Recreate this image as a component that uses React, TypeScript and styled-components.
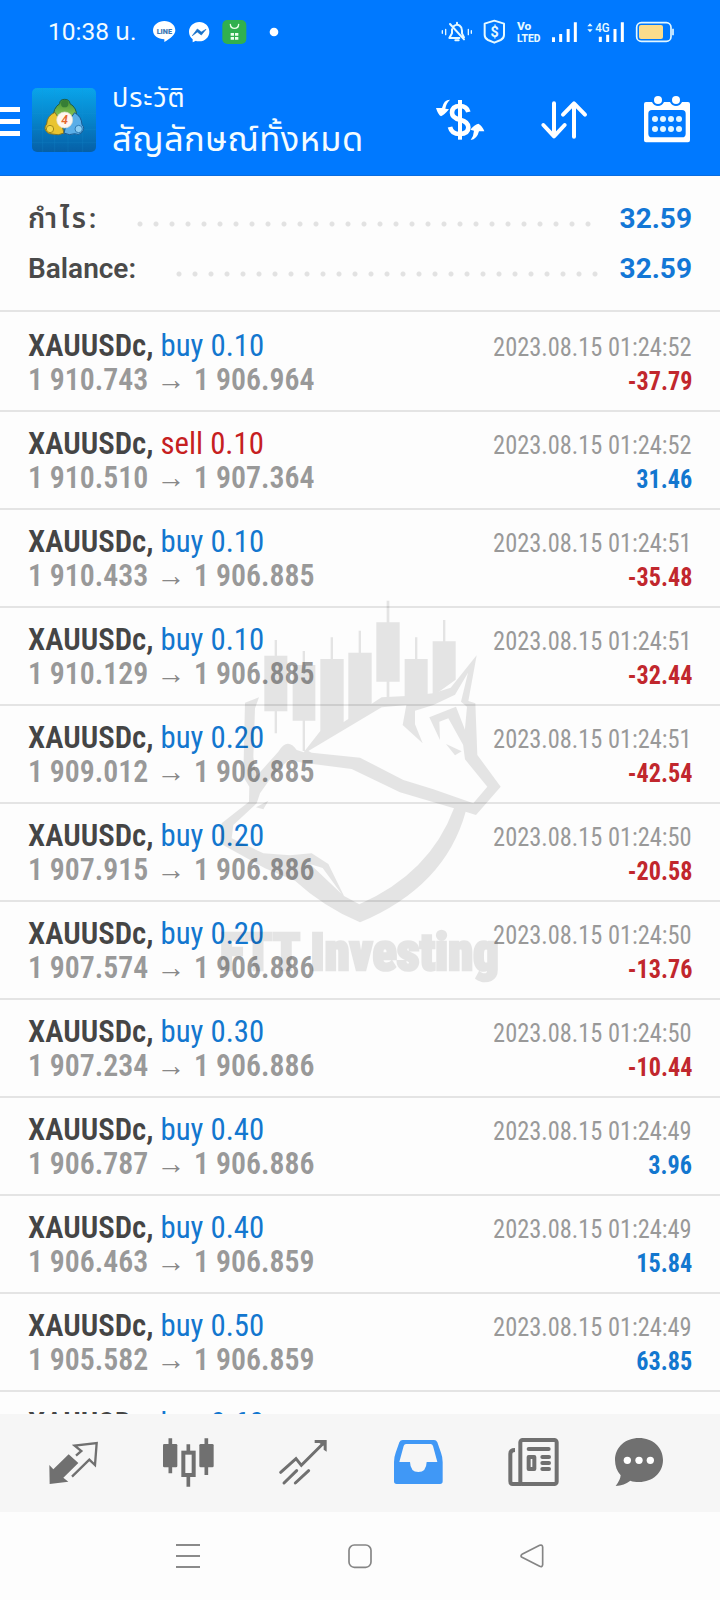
import React from 'react';
import styled, { createGlobalStyle } from 'styled-components';

const GlobalStyle = createGlobalStyle`
  * { box-sizing: border-box; }
  body { margin: 0; background: #fdfdfd; font-family: Roboto, "Noto Sans Thai", sans-serif; }
  svg { display: block; flex: none; }
`;

const Screen = styled.div`
  position: relative;
  width: 720px;
  height: 1600px;
  display: flex;
  flex-direction: column;
  overflow: hidden;
  background: #fdfdfd;
`;

const Header = styled.header`
  flex: none;
  height: 176px;
  background: #0079ff;
  color: #fff;
  border-bottom: 1px solid #0a6de0;
`;

const StatusBar = styled.div`
  height: 64px;
  padding: 0 44px 0 48px;
  display: flex;
  align-items: center;
  justify-content: space-between;
`;

const StatusLeft = styled.div`
  display: flex;
  align-items: center;
  gap: 12px;
`;

const StatusRight = styled.div`
  display: flex;
  align-items: center;
  gap: 9px;
`;

const Clock = styled.span`
  width: 93px;
  font-size: 24.5px;
  line-height: 30px;
  font-weight: 400;
  white-space: nowrap;
  color: #f2fbff;
`;

const Toolbar = styled.div`
  height: 112px;
  padding-right: 29px;
  display: flex;
  align-items: center;
`;

const MenuButton = styled.div`
  width: 20px;
  margin-top: 3px;
  display: flex;
  flex-direction: column;
  gap: 7px;
`;

const MenuBar = styled.span`
  height: 5px;
  background: #fff;
`;

const AppIcon = styled.svg`
  margin-left: 12px;
  border-radius: 5px;
`;

const Titles = styled.div`
  flex: 1;
  margin-left: 16px;
  padding-top: 2px;
  color: #f4fcff;
  white-space: nowrap;
`;

const Subtitle = styled.div`
  font-size: 27px;
  letter-spacing: 0.9px;
  line-height: 36px;
`;

const Title = styled.div`
  font-size: 34.500px;
  letter-spacing: 0.4px;
  line-height: 46px;
`;

const Actions = styled.div`
  display: flex;
  gap: 55px;
`;

const Summary = styled.section`
  flex: none;
  height: 136px;
  padding: 18px 28px 0;
  border-bottom: 2px solid #e4e4e4;
`;

const SummaryRow = styled.div`
  height: 50px;
  display: flex;
  align-items: center;
  justify-content: space-between;
  font-size: 28px;
  line-height: 50px;
  font-weight: 700;
`;

const SummaryLabel = styled.span<{ $width: number; $spacing?: number }>`
  width: ${p => p.$width}px;
  letter-spacing: ${p => p.$spacing ?? 0}px;
  font-size: 28px;
  font-weight: 600;
  white-space: nowrap;
  color: #4a4a4a;
`;

const Leader = styled.span<{ $width: number; $gap: number }>`
  width: ${p => p.$width}px;
  height: 16px;
  margin: 10px ${p => p.$gap}px 0 auto;
  background: radial-gradient(circle at center, #e2e2e2 2px, transparent 3px) 0 0 / 16px 16px repeat-x;
`;

const SummaryValue = styled.span`
  color: #1377d6;
`;

const List = styled.main`
  flex: 1;
  min-height: 0;
  overflow: hidden;
  font-family: "Roboto Condensed", Roboto, sans-serif;
`;

const Deal = styled.article`
  height: 98px;
  padding: 14px 28px 0;
  border-bottom: 2px solid #e4e4e4;
  &:first-child { height: 100px; padding-top: 16px; }
`;

const DealLine = styled.div`
  height: 34px;
  display: flex;
  align-items: baseline;
  justify-content: space-between;
  line-height: 34px;
  white-space: nowrap;
`;

const Instrument = styled.span`
  font-size: 32px;
  color: #454545;
  transform: scaleX(0.962);
  transform-origin: left;
`;

const SymbolName = styled.span`
  font-weight: 600;
`;

const Side = styled.span<{ $sell?: boolean }>`
  color: ${p => (p.$sell ? '#c6201f' : '#1377cf')};
`;

const Prices = styled.span`
  display: flex;
  align-items: baseline;
  font-size: 32px;
  font-weight: 600;
  color: #999;
  transform: scaleX(0.932);
  transform-origin: left;
`;

const Arrow = styled.span`
  width: 49px;
  text-align: center;
  font-size: 31px;
  font-weight: 500;
  color: #888;
`;

const Stamp = styled.span`
  font-size: 26px;
  color: #999;
  transform: scaleX(0.938);
  transform-origin: right;
`;

const Profit = styled.span<{ $loss: boolean }>`
  font-size: 26px;
  font-weight: 700;
  transform: scaleX(0.93);
  transform-origin: right;
  color: ${p => (p.$loss ? '#c1272d' : '#1377cf')};
`;

const Watermark = styled.svg`
  position: absolute;
  left: 200px;
  top: 590px;
  opacity: 0.095;
  pointer-events: none;
`;

const TabBar = styled.nav`
  flex: none;
  height: 98px;
  padding-left: 16px;
  display: flex;
  background: #f6f6f6;
`;

const SystemBar = styled.footer`
  flex: none;
  height: 88px;
  padding: 0 176px;
  display: flex;
  align-items: center;
  justify-content: space-between;
`;

type Trade = [side: string, volume: string, open: string, close: string, time: string, profit: string];

const trades: Trade[] = [
  ['buy', '0.10', '1 910.743', '1 906.964', '01:24:52', '-37.79'],
  ['sell', '0.10', '1 910.510', '1 907.364', '01:24:52', '31.46'],
  ['buy', '0.10', '1 910.433', '1 906.885', '01:24:51', '-35.48'],
  ['buy', '0.10', '1 910.129', '1 906.885', '01:24:51', '-32.44'],
  ['buy', '0.20', '1 909.012', '1 906.885', '01:24:51', '-42.54'],
  ['buy', '0.20', '1 907.915', '1 906.886', '01:24:50', '-20.58'],
  ['buy', '0.20', '1 907.574', '1 906.886', '01:24:50', '-13.76'],
  ['buy', '0.30', '1 907.234', '1 906.886', '01:24:50', '-10.44'],
  ['buy', '0.40', '1 906.787', '1 906.886', '01:24:49', '3.96'],
  ['buy', '0.40', '1 906.463', '1 906.859', '01:24:49', '15.84'],
  ['buy', '0.50', '1 905.582', '1 906.859', '01:24:49', '63.85'],
];

function DealRow({ trade }: { trade: Trade }) {
  const [side, volume, open, close, time, profit] = trade;
  return (
    <Deal>
      <DealLine>
        <Instrument>
          <SymbolName>XAUUSDc,</SymbolName> <Side $sell={side === 'sell'}>{side} {volume}</Side>
        </Instrument>
        <Stamp>2023.08.15 {time}</Stamp>
      </DealLine>
      <DealLine>
        <Prices>{open}<Arrow>→</Arrow>{close}</Prices>
        <Profit $loss={profit.startsWith('-')}>{profit}</Profit>
      </DealLine>
    </Deal>
  );
}

/* Icons are drawn on a grid of three units to one pixel. */
function Icon({ box, children }: { box: [number, number, number, number]; children: React.ReactNode }) {
  return (
    <svg width={box[2] / 3} height={box[3] / 3} viewBox={box.join(' ')} fill="none">
      {children}
    </svg>
  );
}

function StatusIcons() {
  return (
    <StatusRight>
      <Icon box={[243, 57, 96, 78]}>
        <g stroke="#e6faff" strokeWidth="6" strokeLinecap="round" strokeLinejoin="round">
          <path d="M247 92v8M257 88v16M325 88v16M334 92v8" strokeWidth="4" />
          <path d="M282 78q8-7 17-1 7 5 7 15v8l6 12M276 88v12l-8 14h30M270 72l42 46M286 121h10M291 68v4" />
        </g>
      </Icon>
      <Icon box={[366, 57, 72, 78]}>
        <path d="M403 62l29 9v34q0 10-10 15l-19 8-19-8q-10-5-10-15V71z" stroke="#e6faff" strokeWidth="6" strokeLinejoin="round" />
        <text x="403.500" y="111" textAnchor="middle" fontSize="43" fontWeight="700" fontFamily="Roboto" fill="#e6faff">$</text>
      </Icon>
      <Icon box={[465, 57, 81, 78]}>
        <g fill="#e6faff" fontFamily="Roboto" fontWeight="800">
          <text x="471" y="91" fontSize="31" textLength="43" lengthAdjust="spacingAndGlyphs">Vo</text>
          <text x="471" y="125" fontSize="35" textLength="70" lengthAdjust="spacingAndGlyphs">LTED</text>
        </g>
      </Icon>
      <Icon box={[573, 57, 81, 78]}>
        <path d="M580.500 112v14M602 102v24M624.500 87v39M646 67v59" stroke="#fff" strokeWidth="9" />
      </Icon>
      <Icon box={[681, 57, 114, 78]}>
        <path d="M721 110v16M743 104v22M765 87v39M787 67v59" stroke="#fff" strokeWidth="9" />
        <path d="M682 79l8-9 8 9zM682 88l8 9 8-9z" fill="#e6faff" />
        <text x="706" y="95" fontSize="37" fontWeight="500" fontFamily="Roboto" fill="#e6faff" textLength="43" lengthAdjust="spacingAndGlyphs">4G</text>
      </Icon>
      <Icon box={[822, 57, 126, 78]}>
        <rect x="830" y="68" width="103" height="56" rx="14" stroke="#e2f7ff" strokeWidth="5" />
        <rect x="837" y="75" width="72" height="42" rx="6" fill="#fbdc8c" />
        <path d="M939 86v20" stroke="#e2f7ff" strokeWidth="5" />
      </Icon>
    </StatusRight>
  );
}

function NotificationIcons() {
  return (
    <>
      <Icon box={[459, 57, 69, 78]}>
        <path d="M493 63c18 0 33 12 33 28 0 14-15 25-33 35v-8c-19 0-34-11-34-27s16-28 34-28z" fill="#fff" />
        <text x="470" y="101" fontSize="22" fontWeight="900" fontFamily="Roboto" fill="#3d78b4" textLength="46" lengthAdjust="spacingAndGlyphs">LINE</text>
      </Icon>
      <Icon box={[564, 57, 66, 78]}>
        <path d="M598 66c17 0 30 13 30 29s-13 29-30 29c-4 0-7 0-10-2l-10 5v-9c-7-6-11-14-11-23 0-16 14-29 31-29z" fill="#fff" />
        <path d="M577 107l15-20 12 9 14-8-14 17-12-9z" fill="#1a72c9" stroke="#1a72c9" strokeWidth="2" strokeLinejoin="round" />
      </Icon>
      <Icon box={[666, 57, 75, 78]}>
        <rect x="667" y="60" width="72" height="72" rx="15" fill="#31b04e" />
        <path d="M691 73q1 12 12.500 12T716 73" stroke="#eaffea" strokeWidth="4" strokeLinecap="round" />
        <path d="M692 99h10v8h-10zM705 99h10v8h-10zM692 111h10v8h-10zM705 111h10v8h-10z" fill="#eaffea" />
      </Icon>
      <Icon box={[777, 57, 90, 78]}>
        <circle cx="822" cy="96" r="13" fill="#fff" />
      </Icon>
    </>
  );
}

function TerminalLogo() {
  return (
    <AppIcon width="64" height="64" viewBox="96 264 192 192">
      <defs>
        <linearGradient id="tile" x1="0" y1="0" x2="0" y2="1">
          <stop offset="0" stopColor="#0aa4ea" />
          <stop offset="0.5" stopColor="#0784ca" />
          <stop offset="1" stopColor="#0760a6" />
        </linearGradient>
        <linearGradient id="green" x1="0" y1="0" x2="0" y2="1">
          <stop offset="0" stopColor="#3f8f34" />
          <stop offset="1" stopColor="#9bd05a" />
        </linearGradient>
      </defs>
      <rect x="96" y="264" width="192" height="192" fill="url(#tile)" />
      <path d="M128 264v192M164 264v192M204 264v192M248 264v192M96 300h192M96 340h192M96 388h192M96 428h192" stroke="#1b97d8" strokeWidth="1" opacity="0.5" />
      <path d="M161 352q-3-27 18-41 0-13 15-13t16 13q21 12 20 39l-30 10z" fill="url(#green)" stroke="#1d5c4c" strokeWidth="3" />
      <circle cx="194" cy="311" r="11" fill="#367e35" />
      <path d="M165 337q-24 10-25 35-12 14 3 26 4 4 13 4 20 6 36-3l-9-32z" fill="#e9c431" stroke="#7d7428" strokeWidth="3" />
      <circle cx="150" cy="387" r="11" fill="#f3d84c" stroke="#a28a1b" strokeWidth="3" />
      <path d="M224 338q21 12 22 36 11 10-2 25-8 8-20 2-16 7-32-2l7-27z" fill="#5aaee8" stroke="#1b5c93" strokeWidth="3" />
      <circle cx="236" cy="387" r="11" fill="#8bcdf4" stroke="#2f7cb6" strokeWidth="3" />
      <circle cx="194" cy="360" r="24" fill="#fff6ee" stroke="#d8dcd2" strokeWidth="2" />
      <text x="194" y="373" textAnchor="middle" fontFamily="Roboto" fontSize="36" fontWeight="600" fontStyle="italic" fill="#e5672d">4</text>
    </AppIcon>
  );
}

function ActionIcons() {
  return (
    <Actions>
      <Icon box={[225, 288, 150, 144]}>
        <path d="M325 336q-5-18-25-18-24 0-24 20 0 15 24 21 25 6 25 23 0 20-26 20-24 0-29-21" stroke="#fff" strokeWidth="14" strokeLinejoin="round" />
        <path d="M300 300v119" stroke="#fff" strokeWidth="12" />
        <path d="M270 299q-19 0-24 25l-18 0q6 20 15 25 10-4 24-21l-11-2q2-15 14-27zM332 420q19-2 25-26l16 0q-6-17-18-23-12 3-24 18l11 3q-1 17-10 28z" fill="#fff" />
      </Icon>
      <Icon box={[540, 288, 144, 144]}>
        <path d="M582 310v94M550 375l32 34 32-34M642 410v-94M609 344l33-34 33 34" stroke="#fff" strokeWidth="12" strokeLinecap="round" strokeLinejoin="round" />
      </Icon>
      <Icon box={[849, 288, 144, 144]}>
        <path fillRule="evenodd" d="M858 306h18q6 12 18 12t18-12h18q6 12 18 12t18-12h18q6 0 6 6v109q0 6-6 6H858q-6 0-6-6V312q0-6 6-6zM876 330q-11 0-11 11v60q0 11 11 11h90q11 0 11-11v-60q0-11-11-11z" fill="#fff" />
        <g fill="#fff"><circle cx="894" cy="300" r="12" /><circle cx="948" cy="300" r="12" /></g>
        <g fill="#e2f6ff">
          {[885, 909, 933, 957].map(x => (
            <React.Fragment key={x}><circle cx={x} cy="357" r="9" /><circle cx={x} cy="387" r="9" /></React.Fragment>
          ))}
        </g>
      </Icon>
    </Actions>
  );
}

function BrandMark() {
  return (
    <Watermark width="320" height="400" viewBox="0 0 960 1200">
      <path d="M193 197h69v167h-69zM278 225h68v167h-68zM361 207h70v192l-25 24h-45zM445 188h70v155l-70 50zM529 97h70v178h-70zM614 207h69v108l-69 20zM698 154h69v115l-69 50z" />
      <path d="M224 150h7v280h-7zM308 183h7v300h-7zM392 142h7v70h-7zM476 122h7v70h-7zM560 32h8v290h-8zM645 142h7v70h-7zM729 90h7v70h-7z" />
      <path
        fillRule="evenodd"
        d="M311 487L361 423L430 397L545 322L620 318L700 310L752 293L830 196L805 333L826 340L832 495L902 590L828 675L797 665Q735 890 480 997Q370 950 285 872L195 835L60 760L65 700L147 635L148 590L130 560L135 338L177 322L165 355L160 500L168 560L235 485Q262 440 290 480ZM325 483L545 352L620 345L645 362L700 345L765 314L804 248L783 335L801 350L790 470L795 508L862 590L820 640L700 598L610 570L480 503L335 488ZM310 518L265 510L215 560L180 610L170 640L100 705L95 745L190 790L270 796L335 790L385 822L432 918L478 943Q690 850 762 655L600 607L455 537ZM330 822L368 834L425 912Z"
      />
      <path d="M620 340l25 15v48l23 57-60-55zM688 382l80-32 31 80-4 45-50-90-27 10 2 55zM738 462l47 22-20 12zM168 652l37-20-15 26z" />
      <text x="60" y="1141" fontFamily="Roboto Condensed" fontSize="158" fontWeight="900" stroke="#000" strokeWidth="8" textLength="836" lengthAdjust="spacingAndGlyphs">FTT Investing</text>
    </Watermark>
  );
}

function Tabs() {
  return (
    <TabBar>
      <Icon box={[48, 102, 345, 294]}>
        <path d="M148 255l12 13 46-45 29 26-45 44 15 12-56 7z" fill="#707070" />
        <path d="M228 227l16-14-20-16 66-8-5 66-17-16-52 51" stroke="#707070" strokeWidth="7" />
      </Icon>
      <Icon box={[393, 102, 345, 294]}>
        <path d="M511 175v105M619 175v110M565 193v22M565 288v32" stroke="#707070" strokeWidth="11" />
        <rect x="489" y="192" width="43" height="70" rx="4" fill="#707070" />
        <rect x="598" y="192" width="43" height="70" rx="4" fill="#707070" />
        <rect x="550" y="218" width="31" height="67" stroke="#707070" strokeWidth="12" />
      </Icon>
      <Icon box={[738, 102, 345, 294]}>
        <path d="M842 277l46-41 16 20 70-70M852 309l38-37M886 309l40-37" stroke="#707070" strokeWidth="9" strokeLinecap="round" />
        <path d="M944 180h36v35l-9-6v-12l-13-8h-14z" fill="#707070" />
      </Icon>
      <Icon box={[3, 102, 345, 294]}>
        <path fillRule="evenodd" d="M128 180h94q7 0 10 7l11 31q5 13 5 28v58q0 8-8 8H110q-8 0-8-8v-58q0-15 5-28l11-31q3-7 10-7zM138 192q-5 0-7 6l-13 48h32q1 30 25 30t25-30h32l-13-48q-2-6-7-6z" fill="#4098f6" />
      </Icon>
      <Icon box={[348, 102, 345, 294]}>
        <rect x="481" y="180" width="109" height="132" rx="7" stroke="#707070" strokeWidth="12" />
        <path d="M485 312h-27q-7 0-7-8v-83q0-11 14-11" stroke="#707070" strokeWidth="12" />
        <path d="M506 207h60M547 231h20M547 249h20M547 267h20" stroke="#707070" strokeWidth="12" strokeLinecap="round" />
        <rect x="506" y="231" width="17" height="36" stroke="#707070" strokeWidth="12" strokeLinejoin="round" />
      </Icon>
      <Icon box={[693, 102, 345, 294]}>
        <path d="M837 174c41 0 72 28 72 66s-31 66-72 66c-10 0-18-1-26-4q-18 14-44 16 14-18 15-32c-11-12-17-28-17-46 0-38 31-66 72-66z" fill="#707070" />
        <g fill="#fff"><circle cx="802" cy="241" r="11" /><circle cx="837" cy="241" r="11" /><circle cx="871" cy="241" r="11" /></g>
      </Icon>
    </TabBar>
  );
}

function SystemNavigation() {
  return (
    <SystemBar>
      <Icon box={[528, 489, 72, 78]}>
        <path d="M528 495h72M528 528h72M528 561h72" stroke="#8a8a8a" strokeWidth="6" />
      </Icon>
      <Icon box={[0, 0, 72, 78]}>
        <rect x="3" y="6" width="66" height="67" rx="16" stroke="#858585" strokeWidth="5" />
      </Icon>
      <Icon box={[480, 489, 72, 78]}>
        <path d="M486 523l53-27q8-3 9 5v53q-1 8-9 5l-53-27q-6-4 0-9z" stroke="#858585" strokeWidth="5" strokeLinejoin="round" />
      </Icon>
    </SystemBar>
  );
}

export default function App() {
  return (
    <Screen>
      <GlobalStyle />
      <Header>
        <StatusBar>
          <StatusLeft>
            <Clock>10:38 น.</Clock>
            <NotificationIcons />
          </StatusLeft>
          <StatusIcons />
        </StatusBar>
        <Toolbar>
          <MenuButton><MenuBar /><MenuBar /><MenuBar /></MenuButton>
          <TerminalLogo />
          <Titles>
            <Subtitle>ประวัติ</Subtitle>
            <Title>สัญลักษณ์ทั้งหมด</Title>
          </Titles>
          <ActionIcons />
        </Toolbar>
      </Header>
      <Summary>
        <SummaryRow>
          <SummaryLabel $width={72} $spacing={2.8}>กำไร:</SummaryLabel>
          <Leader $width={464} $gap={24} />
          <SummaryValue>32.59</SummaryValue>
        </SummaryRow>
        <SummaryRow>
          <SummaryLabel $width={110}>Balance:</SummaryLabel>
          <Leader $width={432} $gap={17} />
          <SummaryValue>32.59</SummaryValue>
        </SummaryRow>
      </Summary>
      <List>
        {trades.map(trade => <DealRow key={trade[2]} trade={trade} />)}
        <Deal>
          <DealLine>
            <Instrument><SymbolName>XAUUSDc,</SymbolName> <Side>buy 0.60</Side></Instrument>
          </DealLine>
        </Deal>
      </List>
      <Tabs />
      <SystemNavigation />
      <BrandMark />
    </Screen>
  );
}
